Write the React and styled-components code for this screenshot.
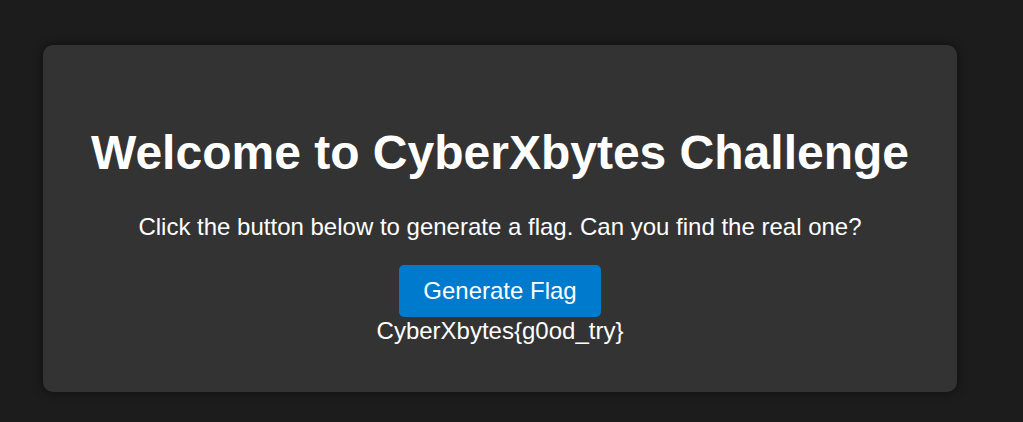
import React from "react";
import styled, { createGlobalStyle } from "styled-components";

const Global = createGlobalStyle`
  html, body {
    margin: 0;
    padding: 0;
    background: #1c1c1c;
  }
  body {
    font-family: "Liberation Sans", Arial, sans-serif;
    color: #ffffff;
  }
`;

const Page = styled.div`
  min-height: 422px;
  padding: 45px 0 0 43px;
  box-sizing: border-box;
`;

const Card = styled.div`
  width: 914px;
  box-sizing: border-box;
  background: #333333;
  border-radius: 10px;
  box-shadow: 0 0 10px rgba(0, 0, 0, 0.5);
  padding: 80px 20px 47px;
  display: flex;
  flex-direction: column;
  align-items: center;
  text-align: center;
`;

const Title = styled.h1`
  margin: 0;
  font-size: 48px;
  font-weight: bold;
  line-height: 55px;
  color: #ffffff;
`;

const Text = styled.p`
  margin: 33px 0 0;
  font-size: 24px;
  line-height: 28px;
  color: #ffffff;
`;

const Button = styled.button`
  margin-top: 24px;
  height: 52px;
  padding: 0 24px;
  font-family: "Liberation Sans", Arial, sans-serif;
  font-size: 24px;
  color: #ffffff;
  background: #007acc;
  border: none;
  border-radius: 5px;
  cursor: pointer;
`;

const Flag = styled.div`
  font-size: 24px;
  line-height: 28px;
  color: #ffffff;
`;

export default function App() {
  return (
    <>
      <Global />
      <Page>
        <Card>
          <Title>Welcome to CyberXbytes Challenge</Title>
          <Text>Click the button below to generate a flag. Can you find the real one?</Text>
          <Button>Generate Flag</Button>
          <Flag>CyberXbytes{"{g0od_try}"}</Flag>
        </Card>
      </Page>
    </>
  );
}
